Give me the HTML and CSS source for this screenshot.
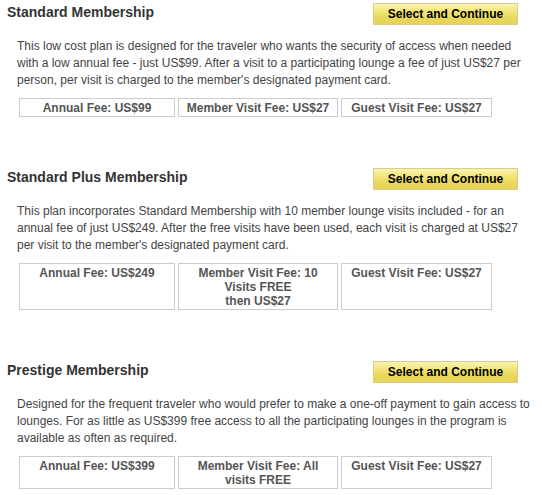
FILE: index.html
```html
<!DOCTYPE html>
<html>
<head>
<meta charset="utf-8">
<link rel="stylesheet" href="styles.css">
</head>
<body>
<div class="plans">
  <section class="plan">
    <div class="plan-head">
      <h2 class="plan-title">Standard Membership</h2>
      <button class="select-btn">Select and Continue</button>
    </div>
    <p class="plan-desc">This low cost plan is designed for the traveler who wants the security of access when needed<br>with a low annual fee - just US$99. After a visit to a participating lounge a fee of just US$27 per<br>person, per visit is charged to the member's designated payment card.</p>
    <div class="fees">
      <div class="fee">Annual Fee: US$99</div>
      <div class="fee">Member Visit Fee: US$27</div>
      <div class="fee">Guest Visit Fee: US$27</div>
    </div>
  </section>
  <section class="plan">
    <div class="plan-head">
      <h2 class="plan-title">Standard Plus Membership</h2>
      <button class="select-btn">Select and Continue</button>
    </div>
    <p class="plan-desc">This plan incorporates Standard Membership with 10 member lounge visits included - for an<br>annual fee of just US$249. After the free visits have been used, each visit is charged at US$27<br>per visit to the member's designated payment card.</p>
    <div class="fees">
      <div class="fee">Annual Fee: US$249</div>
      <div class="fee">Member Visit Fee: 10 Visits FREE<br>then US$27</div>
      <div class="fee">Guest Visit Fee: US$27</div>
    </div>
  </section>
  <section class="plan">
    <div class="plan-head">
      <h2 class="plan-title">Prestige Membership</h2>
      <button class="select-btn">Select and Continue</button>
    </div>
    <p class="plan-desc">Designed for the frequent traveler who would prefer to make a one-off payment to gain access to<br>lounges. For as little as US$399 free access to all the participating lounges in the program is<br>available as often as required.</p>
    <div class="fees">
      <div class="fee">Annual Fee: US$399</div>
      <div class="fee">Member Visit Fee: All visits FREE</div>
      <div class="fee">Guest Visit Fee: US$27</div>
    </div>
  </section>
</div>
</body>
</html>
```
FILE: styles.css
```css
html, body {
  margin: 0;
  padding: 0;
  background: #fff;
}
body {
  font-family: "Liberation Sans", Arial, sans-serif;
  color: #333;
}
.plans {
  display: flex;
  flex-direction: column;
  gap: 51px;
  padding: 3px 0 0 0;
}
.plan-head {
  display: flex;
  justify-content: space-between;
  align-items: flex-start;
  padding-left: 7px;
  padding-right: 24px;
}
.plan-title {
  margin: 0;
  font-size: 14px;
  font-weight: bold;
  color: #333;
  line-height: 18px;
}
.select-btn {
  width: 145px;
  height: 22px;
  margin: 0;
  padding: 0;
  border: 1px solid #d8cd8e;
  background: linear-gradient(#fbf4b0 0%, #f2e57c 35%, #e8d758 70%, #e6d45a 100%);
  font-family: "Liberation Sans", Arial, sans-serif;
  font-weight: bold;
  font-size: 12px;
  color: #000;
  line-height: 20px;
}
.plan-desc {
  margin: 13px 0 0 0;
  padding-left: 17px;
  white-space: nowrap;
  font-size: 12px;
  line-height: 17px;
  color: #444;
}
.fees {
  display: grid;
  grid-template-columns: 156px 160px 151px;
  column-gap: 3px;
  margin: 9px 0 0 19px;
}
.fee {
  border: 1px solid #ccc;
  padding: 2px 4px 1px;
  text-align: center;
  font-size: 12px;
  font-weight: bold;
  line-height: 14px;
  color: #555;
}
```
